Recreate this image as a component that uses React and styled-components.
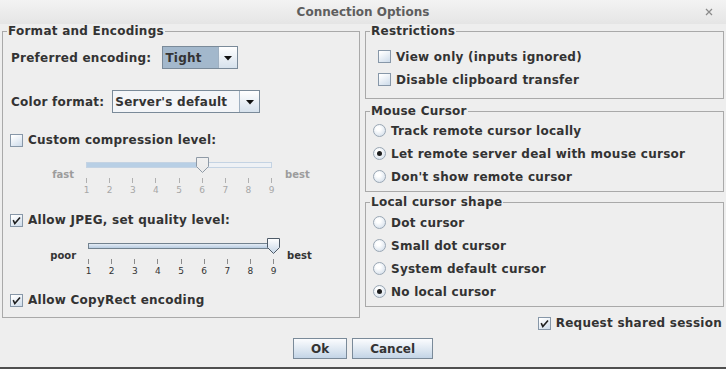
import React from 'react';
import styled, { createGlobalStyle } from 'styled-components';

const GlobalStyle = createGlobalStyle`
  html, body { margin: 0; padding: 0; background: #eeeeee; }
  body { font-family: "DejaVu Sans", "Liberation Sans", sans-serif; }
`;

const Window = styled.div`
  width: 726px;
  height: 369px;
  box-sizing: border-box;
  background: #eeeeee;
  border-bottom: 2px solid #4f4f4f;
  display: flex;
  flex-direction: column;
  font-family: "DejaVu Sans", "Liberation Sans", sans-serif;
  font-size: 12px;
  font-weight: bold;
  letter-spacing: 0.25px;
  color: #333333;
  overflow: hidden;
`;

const TitleBar = styled.div`
  height: 24px;
  flex: none;
  display: grid;
  grid-template-columns: 1fr auto 1fr;
  align-items: center;
  background: linear-gradient(#f3f3f3, #e5e5e5);
  color: #5e5e5e;
  letter-spacing: 0;
`;

const TitleText = styled.div`
  grid-column: 2;
  font-size: 12px;
  font-weight: bold;
`;

const CloseButton = styled.div`
  grid-column: 3;
  justify-self: end;
  margin-right: 13px;
  display: flex;
  align-items: center;
`;

const Body = styled.div`
  display: flex;
  flex-direction: column;
  padding: 0 2px;
`;

const Columns = styled.div`
  display: grid;
  grid-template-columns: 358px 359px;
  column-gap: 5px;
  align-items: start;
`;

const Group = styled.fieldset`
  margin: ${(p) => p.$mt || 0}px 0 0 0;
  padding: 0;
  border: 1px solid #a9a9a9;
  min-width: 0;
`;

const Legend = styled.legend`
  margin-left: 4px;
  padding: 0 1px;
  font-size: 12px;
  line-height: 14px;
  font-weight: bold;
  color: #333333;
`;

const GroupBody = styled.div`
  display: flex;
  flex-direction: column;
  padding: ${(p) => `${p.$pt}px 0 ${p.$pb}px ${p.$pl || 0}px`};
`;

const RightCol = styled.div`
  display: flex;
  flex-direction: column;
`;

const FieldRow = styled.div`
  display: flex;
  align-items: center;
  height: 23px;
  gap: ${(p) => p.$gap || 11}px;
  margin-top: ${(p) => p.$mt || 0}px;
  padding-left: 8px;
`;

const OptionRow = styled.div`
  display: flex;
  align-items: center;
  height: ${(p) => p.$h || 23}px;
  gap: 5px;
  margin-top: ${(p) => p.$mt || 0}px;
  padding-left: ${(p) => p.$indent || 0}px;
  white-space: nowrap;
`;

const SharedRow = styled(OptionRow)`
  justify-content: flex-end;
  margin-right: 2px;
`;

const Combo = styled.div`
  display: flex;
  width: ${(p) => p.$w}px;
  height: 23px;
  box-sizing: border-box;
  border: 1px solid #7a8a99;
`;

const ComboValue = styled.div`
  flex: 1;
  display: flex;
  align-items: center;
  padding-left: 2px;
  background: ${(p) => (p.$selected ? '#a3b8cc' : '#f3f5f8')};
  white-space: nowrap;
`;

const ComboArrow = styled.div`
  width: ${(p) => p.$w}px;
  box-sizing: border-box;
  border-left: 1px solid #9fb0c1;
  background: linear-gradient(#ffffff, #d6e1ec);
  display: flex;
  align-items: center;
  justify-content: center;
  padding-top: 1px;
`;

const Box = styled.span`
  width: 13px;
  height: 13px;
  box-sizing: border-box;
  flex: none;
  border: 1px solid #8797a8;
  background: linear-gradient(150deg, #ffffff 10%, #cddbea);
  display: flex;
  align-items: center;
  justify-content: center;
`;

const Radio = styled.span`
  width: 13px;
  height: 13px;
  box-sizing: border-box;
  flex: none;
  border-radius: 50%;
  border: 1px solid #9aa7b4;
  background: radial-gradient(circle at 40% 35%, #ffffff 20%, #cbd8e6);
  display: flex;
  align-items: center;
  justify-content: center;
  &::after {
    content: '';
    display: ${(p) => (p.$on ? 'block' : 'none')};
    width: 5px;
    height: 5px;
    border-radius: 50%;
    background: #1e1e1e;
  }
`;

const SliderRow = styled.div`
  display: flex;
  justify-content: center;
  align-items: flex-start;
  margin-top: ${(p) => p.$mt || 0}px;
`;

const SideLabel = styled.div`
  margin-top: 12px;
  font-size: 10px;
  line-height: 12px;
  font-weight: bold;
  letter-spacing: 0;
  color: ${(p) => (p.$disabled ? '#9c9c9c' : '#333333')};
`;

const Scale = styled.div`
  width: 186px;
  margin: 0 13px 0 12px;
  display: flex;
  flex-direction: column;
`;

const TrackArea = styled.div`
  position: relative;
  height: 16px;
`;

const Track = styled.div`
  margin-top: 5px;
  height: 6px;
  box-sizing: border-box;
  border: 1px solid ${(p) => (p.$disabled ? '#c4d3e3' : '#72828f')};
  background: ${(p) => (p.$disabled ? '#eef1f5' : '#e8eef5')};
  display: flex;
`;

const TrackFill = styled.div`
  height: 100%;
  background: ${(p) =>
    p.$disabled ? '#b8cfe5' : 'linear-gradient(#e4ecf5, #b9cde2)'};
`;

const Thumb = styled.svg`
  position: absolute;
  top: 0;
`;

const Ticks = styled.div`
  margin-top: 5px;
  height: 5px;
  display: flex;
  justify-content: space-between;
`;

const Tick = styled.span`
  width: 1px;
  height: 5px;
  background: ${(p) => (p.$disabled ? '#b0b0b0' : '#8a8a8a')};
`;

const Numbers = styled.div`
  margin-top: 1px;
  height: 12px;
  display: flex;
  justify-content: space-between;
`;

const Num = styled.span`
  width: 1px;
  display: flex;
  justify-content: center;
  font-size: 9px;
  line-height: 12px;
  font-weight: normal;
  letter-spacing: 0;
  color: ${(p) => (p.$disabled ? '#a6a6a6' : '#333333')};
`;

const ButtonRow = styled.div`
  display: flex;
  justify-content: center;
  gap: 5px;
  margin-top: 5px;
`;

const Button = styled.button`
  height: 21px;
  box-sizing: border-box;
  padding: 0 17px;
  border: 1px solid #7a8a99;
  border-radius: 0;
  background: linear-gradient(#fbfcfe, #dde7f1 55%, #c3d4e6);
  font-family: "DejaVu Sans", "Liberation Sans", sans-serif;
  font-size: 12px;
  font-weight: bold;
  letter-spacing: 0;
  color: #333333;
`;

const CheckMark = () => (
  <svg width="11" height="11" viewBox="0 0 11 11">
    <path d="M2.2 5.2 L3.8 8.6 L9 2.4" fill="none" stroke="#1f1f1f" strokeWidth="1.6" />
  </svg>
);

const Checkbox = ({ checked }) => <Box>{checked ? <CheckMark /> : null}</Box>;

const DownArrow = () => (
  <svg width="8" height="5" viewBox="0 0 8 5">
    <path d="M0 0 H8 L4 4.5 Z" fill="#111" />
  </svg>
);

const Slider = ({ left, right, value, disabled }) => {
  const frac = (value - 1) / 8;
  const center = Math.round(frac * 185);
  const nums = [1, 2, 3, 4, 5, 6, 7, 8, 9];
  return (
    <>
      <SideLabel $disabled={disabled}>{left}</SideLabel>
      <Scale>
        <TrackArea>
          <Track $disabled={disabled}>
            <TrackFill $disabled={disabled} style={{ width: `${frac * 100}%` }} />
          </Track>
          <Thumb width="13" height="16" viewBox="0 0 13 16" style={{ left: center - 6 }}>
            <defs>
              <linearGradient id={`tg-${left}`} x1="0" y1="0" x2="0" y2="1">
                <stop offset="0" stopColor={disabled ? '#f0f0f0' : '#ffffff'} />
                <stop offset="1" stopColor={disabled ? '#eaeaea' : '#c6d6e7'} />
              </linearGradient>
            </defs>
            <path
              d="M0.5 0.5 H12.5 V9.5 L6.5 15.5 L0.5 9.5 Z"
              fill={`url(#tg-${left})`}
              stroke={disabled ? '#8f9aa6' : '#4e5b68'}
            />
          </Thumb>
        </TrackArea>
        <Ticks>
          {nums.map((n) => (
            <Tick key={n} $disabled={disabled} />
          ))}
        </Ticks>
        <Numbers>
          {nums.map((n) => (
            <Num key={n} $disabled={disabled}>
              {n}
            </Num>
          ))}
        </Numbers>
      </Scale>
      <SideLabel $disabled={disabled}>{right}</SideLabel>
    </>
  );
};

export default function App() {
  return (
    <>
      <GlobalStyle />
      <Window>
        <TitleBar>
          <TitleText>Connection Options</TitleText>
          <CloseButton>
            <svg width="8" height="8" viewBox="0 0 8 8">
              <path d="M1 1 L7 7 M7 1 L1 7" stroke="#8a8a8a" strokeWidth="1.2" />
            </svg>
          </CloseButton>
        </TitleBar>
        <Body>
          <Columns>
            <Group>
              <Legend>Format and Encodings</Legend>
              <GroupBody $pt={0} $pb={7}>
                <FieldRow $mt={8}>
                  <span>Preferred encoding:</span>
                  <Combo $w={76}>
                    <ComboValue $selected>Tight</ComboValue>
                    <ComboArrow $w={19}>
                      <DownArrow />
                    </ComboArrow>
                  </Combo>
                </FieldRow>
                <FieldRow $mt={21} $gap={8}>
                  <span>Color format:</span>
                  <Combo $w={148}>
                    <ComboValue>Server's default</ComboValue>
                    <ComboArrow $w={20}>
                      <DownArrow />
                    </ComboArrow>
                  </Combo>
                </FieldRow>
                <OptionRow $h={20} $mt={17} $indent={7}>
                  <Checkbox />
                  <span>Custom compression level:</span>
                </OptionRow>
                <SliderRow $mt={7}>
                  <Slider left="fast" right="best" value={6} disabled />
                </SliderRow>
                <OptionRow $h={20} $mt={14} $indent={7}>
                  <Checkbox checked />
                  <span>Allow JPEG, set quality level:</span>
                </OptionRow>
                <SliderRow $mt={8}>
                  <Slider left="poor" right="best" value={9} />
                </SliderRow>
                <OptionRow $h={20} $mt={13} $indent={7}>
                  <Checkbox checked />
                  <span>Allow CopyRect encoding</span>
                </OptionRow>
              </GroupBody>
            </Group>
            <RightCol>
              <Group>
                <Legend>Restrictions</Legend>
                <GroupBody $pt={7} $pb={7} $pl={12}>
                  <OptionRow>
                    <Checkbox />
                    <span>View only (inputs ignored)</span>
                  </OptionRow>
                  <OptionRow>
                    <Checkbox />
                    <span>Disable clipboard transfer</span>
                  </OptionRow>
                </GroupBody>
              </Group>
              <Group $mt={5}>
                <Legend>Mouse Cursor</Legend>
                <GroupBody $pt={1} $pb={3} $pl={7}>
                  <OptionRow>
                    <Radio />
                    <span>Track remote cursor locally</span>
                  </OptionRow>
                  <OptionRow>
                    <Radio $on />
                    <span>Let remote server deal with mouse cursor</span>
                  </OptionRow>
                  <OptionRow>
                    <Radio />
                    <span>Don't show remote cursor</span>
                  </OptionRow>
                </GroupBody>
              </Group>
              <Group $mt={3}>
                <Legend>Local cursor shape</Legend>
                <GroupBody $pt={2} $pb={3} $pl={7}>
                  <OptionRow>
                    <Radio />
                    <span>Dot cursor</span>
                  </OptionRow>
                  <OptionRow>
                    <Radio />
                    <span>Small dot cursor</span>
                  </OptionRow>
                  <OptionRow>
                    <Radio />
                    <span>System default cursor</span>
                  </OptionRow>
                  <OptionRow>
                    <Radio $on />
                    <span>No local cursor</span>
                  </OptionRow>
                </GroupBody>
              </Group>
              <SharedRow $h={20} $mt={6}>
                <Checkbox checked />
                <span>Request shared session</span>
              </SharedRow>
            </RightCol>
          </Columns>
          <ButtonRow>
            <Button>Ok</Button>
            <Button>Cancel</Button>
          </ButtonRow>
        </Body>
      </Window>
    </>
  );
}
